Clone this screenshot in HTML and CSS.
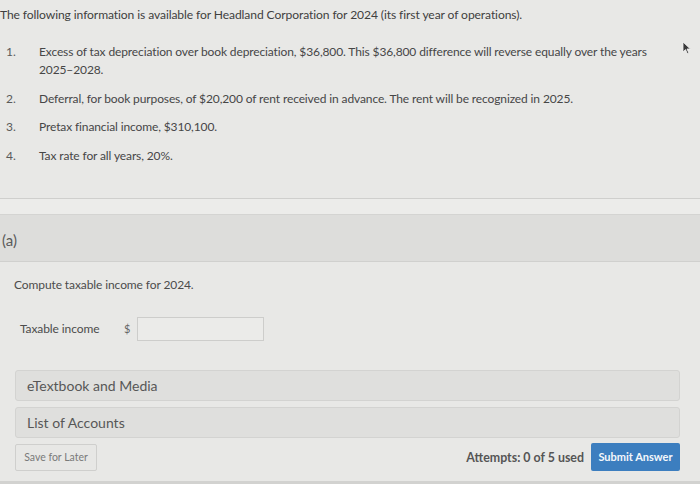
FILE: index.html
```html
<!DOCTYPE html>
<html lang="en">
<head>
<meta charset="utf-8">
<title>Headland Corporation</title>
<link rel="stylesheet" href="styles.css">
</head>
<body>
<div class="page">
  <p class="intro">The following information is available for Headland Corporation for 2024 (its first year of operations).</p>
  <ol class="facts">
    <li><span class="num">1.</span><span class="txt">Excess of tax depreciation over book depreciation, $36,800. This $36,800 difference will reverse equally over the years 2025–2028.</span></li>
    <li><span class="num">2.</span><span class="txt">Deferral, for book purposes, of $20,200 of rent received in advance. The rent will be recognized in 2025.</span></li>
    <li><span class="num">3.</span><span class="txt">Pretax financial income, $310,100.</span></li>
    <li><span class="num">4.</span><span class="txt">Tax rate for all years, 20%.</span></li>
  </ol>
  <div class="divider"></div>
  <div class="part-band">(a)</div>
  <div class="part-body">
    <p class="prompt">Compute taxable income for 2024.</p>
    <div class="answer-row">
      <span class="label">Taxable income</span>
      <span class="dollar">$</span>
      <span class="input"></span>
    </div>
    <div class="resource">eTextbook and Media</div>
    <div class="resource">List of Accounts</div>
    <div class="actions">
      <span class="save">Save for Later</span>
      <span class="spacer"></span>
      <span class="attempts">Attempts: 0 of 5 used</span>
      <span class="submit">Submit Answer</span>
    </div>
  </div>
  <div class="bottom-line"></div>
  <svg class="cursor" width="10" height="14" viewBox="0 0 10 14"><path d="M1 1 L1 11 L3.5 8.6 L5.3 12.6 L6.8 11.9 L5 8 L8.4 8 Z" fill="#3a3a3a" stroke="#f2f2f2" stroke-width="0.8"/></svg>
</div>
</body>
</html>
```

FILE: styles.css
```css
* { box-sizing: border-box; }
html, body { margin: 0; padding: 0; }
body {
  background: #e8e8e6;
  font-family: Lato, "Liberation Sans", sans-serif;
  color: #444;
  width: 700px;
  height: 484px;
  overflow: hidden;
}
.page { position: relative; height: 484px; }
.intro {
  margin: 0;
  padding: 6px 0 0 0;
  font-size: 12.1px;
  line-height: 18px;
  letter-spacing: -0.1px;
  color: #404040;
}
.facts {
  list-style: none;
  margin: 19px 0 0 0;
  padding: 0;
}
.facts li {
  display: flex;
  font-size: 12px;
  line-height: 18px;
  margin-bottom: 10.5px;
  color: #464646;
}
.facts .num { width: 39px; padding-left: 6px; color: #5a5a5a; flex: none; }
.facts .txt { width: 626px; letter-spacing: -0.12px; }
.divider {
  margin-top: 33px;
  height: 17px;
  border-top: 1px solid #cfcfcd;
  border-bottom: 1px solid #d4d4d2;
  background: #ececea;
}
.part-band {
  height: 47px;
  background: #dddddb;
  border-bottom: 1px solid #d0d0ce;
  font-size: 15px;
  color: #5a5a5a;
  padding: 16px 0 0 2px;
}
.part-body { padding: 0 20px 0 15px; }
.prompt {
  margin: 0 0 0 -1px;
  padding-top: 14px;
  font-size: 12px;
  line-height: 18px;
  color: #4c4c4c;
  letter-spacing: -0.1px;
}
.answer-row {
  display: flex;
  align-items: center;
  margin-top: 23px;
  padding-left: 5px;
  font-size: 12px;
  color: #4c4c4c;
}
.label { width: 104px; letter-spacing: -0.1px; }
.dollar { width: 13px; color: #666; font-size: 11px; }
.input {
  width: 127px;
  height: 24px;
  border: 1px solid #cdcdcb;
  background: #ebebe9;
}
.resource {
  margin-top: 6px;
  height: 31px;
  border: 1px solid #d3d3d1;
  border-radius: 3px;
  background: #dfdfdd;
  font-size: 14px;
  color: #575757;
  padding: 6px 0 0 11px;
}
.answer-row + .resource { margin-top: 29px; }
.actions {
  display: flex;
  align-items: center;
  margin-top: 6px;
}
.save {
  width: 82px;
  height: 27px;
  border: 1px solid #cfcfcd;
  border-radius: 2px;
  background: #e7e7e5;
  font-size: 10.5px;
  color: #7a7a7a;
  display: flex;
  align-items: center;
  justify-content: center;
}
.spacer { flex: 1; }
.attempts {
  font-size: 12.4px;
  font-weight: 700;
  color: #555;
  margin-right: 7px;
  margin-top: 1px;
}
.submit {
  width: 89px;
  height: 28px;
  margin-top: -1px;
  background: #3c7ebf;
  border-radius: 2px;
  color: #f4f7fb;
  font-size: 11px;
  font-weight: 700;
  display: flex;
  align-items: center;
  justify-content: center;
}
.bottom-line {
  position: absolute;
  left: 0;
  right: 0;
  top: 481px;
  height: 3px;
  background: #d2d2d0;
}
.cursor { position: absolute; left: 682px; top: 41px; }
```
